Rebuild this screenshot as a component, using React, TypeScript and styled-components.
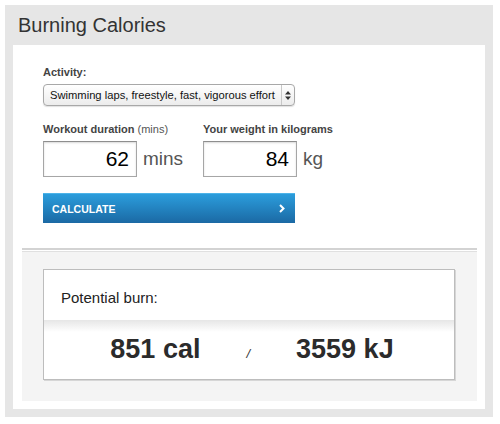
import React from "react";
import styled, { createGlobalStyle } from "styled-components";

const GlobalStyle = createGlobalStyle`
  body {
    margin: 0;
    background: #ffffff;
    font-family: "Liberation Sans", Arial, Helvetica, sans-serif;
  }
`;

const Widget = styled.div`
  margin: 5px;
  width: 488px;
  box-sizing: border-box;
  background-color: #e6e6e6;
  padding: 0 8px 8px;
`;

const Title = styled.h2`
  margin: 0;
  height: 40px;
  line-height: 40px;
  padding-left: 5px;
  font-size: 20px;
  font-weight: normal;
  color: #333;
`;

const Panel = styled.div`
  background-color: #ffffff;
  padding-bottom: 8px;
`;

const Form = styled.div`
  padding: 21px 30px 0;
`;

const Label = styled.div`
  font-size: 11px;
  line-height: 13px;
  font-weight: bold;
  color: #444;
  margin-bottom: 5px;
  white-space: nowrap;

  span {
    font-weight: normal;
    color: #555;
  }
`;

const SelectBox = styled.div`
  display: flex;
  align-items: stretch;
  width: 252px;
  height: 22px;
  box-sizing: border-box;
  border: 1px solid #a8a8a8;
  border-radius: 4px;
  background: linear-gradient(#ffffff, #ececec);
  box-shadow: 0 1px 1px rgba(0, 0, 0, 0.12);
  font-size: 11.2px;
  color: #111;
`;

const SelectText = styled.div`
  flex: 1;
  display: flex;
  align-items: center;
  padding-left: 6px;
  white-space: nowrap;
  overflow: hidden;
`;

const SelectArrows = styled.div`
  width: 12px;
  border-left: 1px solid #c8c8c8;
  display: flex;
  align-items: center;
  justify-content: center;
`;

const Fields = styled.div`
  display: grid;
  grid-template-columns: 160px 160px;
  margin-top: 17px;
`;

const InputRow = styled.div`
  display: flex;
  align-items: center;
  gap: 6px;
`;

const NumberInput = styled.input`
  width: 94px;
  height: 36px;
  box-sizing: border-box;
  border: 1px solid #a6a6a6;
  border-top-color: #8e8e8e;
  box-shadow: inset 0 1px 2px rgba(0, 0, 0, 0.15);
  padding: 0 7px 0 4px;
  text-align: right;
  font-family: "Liberation Sans", Arial, sans-serif;
  font-size: 21px;
  color: #000;
  outline: none;
`;

const Unit = styled.span`
  font-size: 19px;
  color: #555;
`;

const CalcButton = styled.button`
  display: flex;
  align-items: center;
  justify-content: space-between;
  margin-top: 16px;
  width: 252px;
  height: 30px;
  padding: 0 10px 0 9px;
  border: none;
  border-top: 1px solid #4db3e8;
  background: linear-gradient(#2b9ddc, #1b69a4);
  color: #ffffff;
  font-family: "Liberation Sans", Arial, sans-serif;
  font-size: 10.5px;
  font-weight: bold;
  cursor: pointer;
`;

const Divider = styled.div`
  height: 2px;
  margin: 25px 8px 1px 9px;
  background-color: #d3d3d3;
`;

const ResultArea = styled.div`
  margin: 0 8px 0 9px;
  border-top: 1px solid #e0e0e0;
  background-color: #f4f4f4;
  padding: 17px 22px 21px 21px;
`;

const ResultBox = styled.div`
  background-color: #ffffff;
  border: 1px solid #bdbdbd;
  box-shadow: 1px 1px 0 #d6d6d6;
`;

const ResultHeader = styled.div`
  height: 50px;
  padding: 19px 0 0 17px;
  box-sizing: border-box;
  font-size: 15px;
  color: #222;
`;

const ResultValues = styled.div`
  height: 59px;
  display: flex;
  align-items: center;
  justify-content: center;
  gap: 46px;
  padding-left: 6px;
  background: linear-gradient(#e6e6e6, #ffffff 12px);
  font-size: 27px;
  font-weight: bold;
  color: #2b2b2b;
`;

const Slash = styled.span`
  font-size: 13px;
  font-weight: normal;
  font-style: italic;
  color: #333;
  margin-top: 8px;
`;

export default function App() {
  return (
    <>
      <GlobalStyle />
      <Widget>
        <Title>Burning Calories</Title>
        <Panel>
          <Form>
            <Label>Activity:</Label>
            <SelectBox>
              <SelectText>Swimming laps, freestyle, fast, vigorous effort</SelectText>
              <SelectArrows>
                <svg width="6" height="9" viewBox="0 0 6 9">
                  <path d="M3 0 L6 3.5 H0 Z M3 9 L6 5.5 H0 Z" fill="#333" />
                </svg>
              </SelectArrows>
            </SelectBox>
            <Fields>
              <div>
                <Label>
                  Workout duration <span>(mins)</span>
                </Label>
                <InputRow>
                  <NumberInput defaultValue="62" />
                  <Unit>mins</Unit>
                </InputRow>
              </div>
              <div>
                <Label>Your weight in kilograms</Label>
                <InputRow>
                  <NumberInput defaultValue="84" />
                  <Unit>kg</Unit>
                </InputRow>
              </div>
            </Fields>
            <CalcButton>
              CALCULATE
              <svg width="6" height="9" viewBox="0 0 6 9">
                <path d="M1 1 L4.5 4.5 L1 8" stroke="#fff" strokeWidth="2" fill="none" />
              </svg>
            </CalcButton>
          </Form>
          <Divider />
          <ResultArea>
            <ResultBox>
              <ResultHeader>Potential burn:</ResultHeader>
              <ResultValues>
                <span>851 cal</span>
                <Slash>/</Slash>
                <span>3559 kJ</span>
              </ResultValues>
            </ResultBox>
          </ResultArea>
        </Panel>
      </Widget>
    </>
  );
}
